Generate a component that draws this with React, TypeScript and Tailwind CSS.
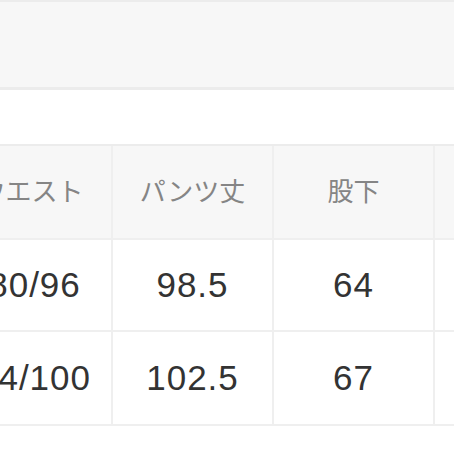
// サイズ表（切り抜き）

import React from 'react'

const headers = ['ウエスト', 'パンツ丈', '股下', '']
const rows = [
  ['80/96', '98.5', '64', ''],
  ['84/100', '102.5', '67', ''],
]

export default function App() {
  return (
    <div
      className="w-[454px] h-[454px] bg-white overflow-hidden"
      style={{ fontFamily: '"Liberation Sans", "Noto Sans CJK JP", sans-serif' }}
    >
      {/* 上部のグレー帯 */}
      <div className="h-[90px] bg-[#f7f7f7] border-t-2 border-b-[3px] border-[#ececec]" />

      {/* 余白 */}
      <div className="h-[54px]" />

      {/* テーブル */}
      <div className="ml-[-48px] w-[700px] border-t-2 border-[#ececec]">
        <div className="flex h-[94px] bg-[#f7f7f7] border-b-2 border-[#efefef]">
          {headers.map((h, i) => (
            <div
              key={i}
              className="w-[161px] shrink-0 flex items-center justify-center border-r-2 border-[#efefef] text-[26px] text-[#858585]"
            >
              {h}
            </div>
          ))}
        </div>
        {rows.map((r, ri) => (
          <div
            key={ri}
            className={`flex border-b-2 border-[#efefef] ${ri === 0 ? 'h-[92px]' : 'h-[94px]'}`}
          >
            {r.map((c, i) => (
              <div
                key={i}
                className={`w-[161px] shrink-0 flex items-center justify-center border-r-2 border-[#efefef] text-[35px] tracking-[1px] text-[#333333] ${i === 0 ? 'pl-[6px]' : ''}`}
              >
                {c}
              </div>
            ))}
          </div>
        ))}
      </div>
    </div>
  )
}
